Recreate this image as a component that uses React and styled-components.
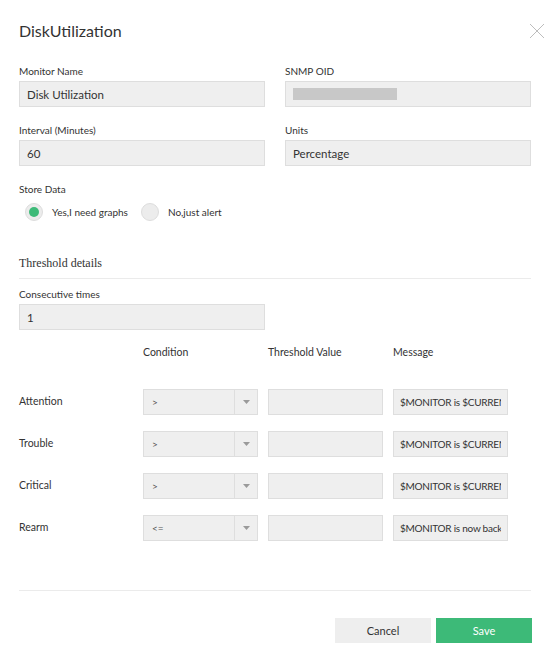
import React from "react";
import styled, { createGlobalStyle } from "styled-components";

const GlobalStyle = createGlobalStyle`
  body {
    margin: 0;
    background: #ffffff;
    font-family: 'Lato', 'Liberation Sans', sans-serif;
    color: #333333;
  }
  * { box-sizing: border-box; }
`;

const rows = [
  { name: "Attention", cond: ">", message: "$MONITOR is $CURRENT_VALUE" },
  { name: "Trouble", cond: ">", message: "$MONITOR is $CURRENT_VALUE" },
  { name: "Critical", cond: ">", message: "$MONITOR is $CURRENT_VALUE" },
  { name: "Rearm", cond: "<=", message: "$MONITOR is now back to normal" },
];

export default function App() {
  const [store, setStore] = React.useState("yes");

  return (
    <>
      <GlobalStyle />
      <Dialog>
        <Header>
          <Title>DiskUtilization</Title>
          <CloseButton aria-label="close">
            <svg width="16" height="16" viewBox="0 0 16 16">
              <path d="M1 1 L15 15 M15 1 L1 15" stroke="#bdbdbd" strokeWidth="1" fill="none" />
            </svg>
          </CloseButton>
        </Header>

        <Body>
          <TwoCols>
            <Field>
              <Label>Monitor Name</Label>
              <Input readOnly value="Disk Utilization" />
            </Field>
            <Field>
              <Label>SNMP OID</Label>
              <MaskedBox>
                <Masked />
              </MaskedBox>
            </Field>
          </TwoCols>

          <TwoCols>
            <Field>
              <Label>Interval (Minutes)</Label>
              <Input readOnly value="60" />
            </Field>
            <Field>
              <Label>Units</Label>
              <Input readOnly value="Percentage" />
            </Field>
          </TwoCols>

          <Field>
            <Label>Store Data</Label>
            <RadioRow>
              <RadioOption onClick={() => setStore("yes")}>
                <Radio checked={store === "yes"} />
                Yes,I need graphs
              </RadioOption>
              <RadioOption onClick={() => setStore("no")}>
                <Radio checked={store === "no"} />
                No,just alert
              </RadioOption>
            </RadioRow>
          </Field>

          <SectionTitle>Threshold details</SectionTitle>
          <Divider />

          <TwoCols>
            <Field>
              <Label>Consecutive times</Label>
              <Input readOnly value="1" />
            </Field>
          </TwoCols>

          <ThresholdGrid>
            <span />
            <ColHead>Condition</ColHead>
            <ColHead>Threshold Value</ColHead>
            <ColHead>Message</ColHead>
            {rows.map((r) => (
              <React.Fragment key={r.name}>
                <RowName>{r.name}</RowName>
                <Select>
                  <SelectValue>{r.cond}</SelectValue>
                  <SelectArrow>
                    <svg width="7" height="4" viewBox="0 0 7 4">
                      <path d="M0 0 L7 0 L3.5 4 Z" fill="#9a9a9a" />
                    </svg>
                  </SelectArrow>
                </Select>
                <Input readOnly value="" />
                <Input readOnly small value={r.message} />
              </React.Fragment>
            ))}
          </ThresholdGrid>

          <FooterDivider />

          <Footer>
            <Button>Cancel</Button>
            <Button primary>Save</Button>
          </Footer>
        </Body>
      </Dialog>
    </>
  );
}

const Dialog = styled.div`
  width: 557px;
  height: 647px;
  background: #ffffff;
`;

const Header = styled.div`
  display: flex;
  align-items: center;
  justify-content: space-between;
  padding: 20px 12px 0 19px;
`;

const Title = styled.h1`
  margin: 0;
  font-size: 16px;
  line-height: 22px;
  font-weight: 400;
  color: #333333;
`;

const CloseButton = styled.div`
  width: 16px;
  height: 16px;
  display: flex;
`;

const Body = styled.div`
  padding: 22px 26px 0 19px;
  display: flex;
  flex-direction: column;
`;

const TwoCols = styled.div`
  display: grid;
  grid-template-columns: 246px 246px;
  column-gap: 20px;
  margin-bottom: 16px;
`;

const Field = styled.div`
  display: flex;
  flex-direction: column;
`;

const Label = styled.label`
  font-size: 10px;
  line-height: 14px;
  color: #333333;
  margin-bottom: 3px;
`;

const Input = styled.input`
  width: 100%;
  height: 26px;
  margin: 0;
  background: #efefef;
  border: 1px solid #dedede;
  border-radius: 0;
  outline: none;
  padding: 0 ${(p) => (p.small ? "6px" : "7px")};
  font-family: 'Lato', 'Liberation Sans', sans-serif;
  font-size: ${(p) => (p.small ? "10px" : "11.5px")};
  letter-spacing: ${(p) => (p.small ? "-0.25px" : "0")};
  color: #333333;
`;

const MaskedBox = styled.div`
  height: 26px;
  background: #efefef;
  border: 1px solid #dedede;
  display: flex;
  align-items: center;
  padding: 0 7px;
`;

const Masked = styled.div`
  width: 104px;
  height: 12px;
  background: #c8c8c8;
`;

const RadioRow = styled.div`
  display: flex;
  align-items: center;
  gap: 13px;
  padding-left: 6px;
  margin-top: 4px;
`;

const RadioOption = styled.div`
  display: flex;
  align-items: center;
  gap: 9px;
  font-size: 10px;
  color: #333333;
  cursor: pointer;
`;

const Radio = styled.span`
  width: 18px;
  height: 18px;
  border-radius: 50%;
  background: #ececec;
  border: 1px solid #dddddd;
  display: flex;
  align-items: center;
  justify-content: center;

  &::after {
    content: "";
    width: 10px;
    height: 10px;
    border-radius: 50%;
    background: ${(p) => (p.checked ? "#3dba78" : "transparent")};
  }
`;

const SectionTitle = styled.div`
  margin-top: 35px;
  font-family: 'Liberation Serif', 'DejaVu Serif', serif;
  font-size: 12px;
  line-height: 14px;
  color: #333333;
`;

const Divider = styled.div`
  height: 1px;
  background: #ebebeb;
  margin: 8px 0 8px;
`;

const ThresholdGrid = styled.div`
  display: grid;
  grid-template-columns: 114px 115px 115px 115px;
  column-gap: 10px;
  row-gap: 16px;
  align-items: center;
  margin-top: -1px;

  & > :nth-child(-n + 4) {
    margin-bottom: 14px;
  }
`;

const ColHead = styled.div`
  font-size: 10.5px;
  line-height: 14px;
  color: #333333;
`;

const RowName = styled.div`
  font-size: 10.5px;
  line-height: 14px;
  color: #333333;
  margin-top: -3px;
`;

const Select = styled.div`
  height: 26px;
  background: #efefef;
  border: 1px solid #dedede;
  display: flex;
`;

const SelectValue = styled.div`
  flex: 1;
  display: flex;
  align-items: center;
  padding-left: 8px;
  font-size: 10px;
  color: #555555;
`;

const SelectArrow = styled.div`
  width: 23px;
  border-left: 1px solid #dedede;
  display: flex;
  align-items: center;
  justify-content: center;
`;

const FooterDivider = styled.div`
  height: 1px;
  background: #ebebeb;
  margin-top: 49px;
`;

const Footer = styled.div`
  display: flex;
  justify-content: flex-end;
  gap: 5px;
  margin-top: 27px;
  margin-right: -1px;
`;

const Button = styled.button`
  width: 96px;
  height: 25px;
  border: none;
  font-family: 'Lato', 'Liberation Sans', sans-serif;
  font-size: 11px;
  background: ${(p) => (p.primary ? "#3dba78" : "#eeeeee")};
  color: ${(p) => (p.primary ? "#ffffff" : "#333333")};
  cursor: pointer;
`;
